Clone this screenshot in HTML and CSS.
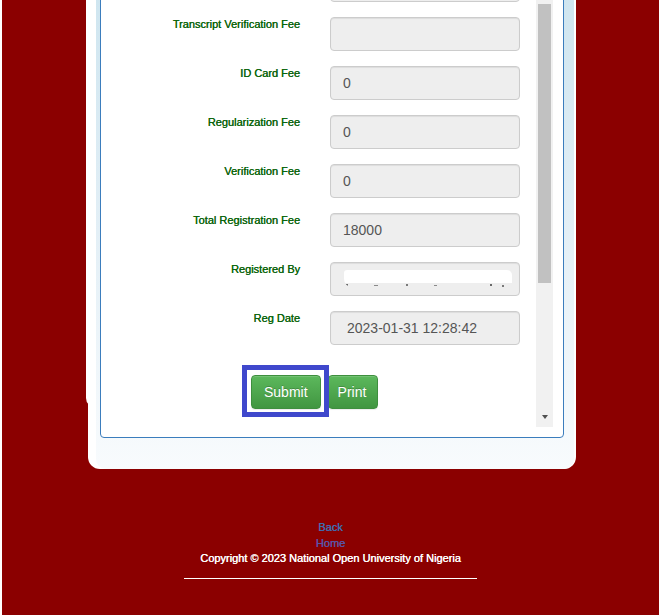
FILE: index.html
```html
<!DOCTYPE html>
<html lang="en">
<head>
<meta charset="utf-8">
<title>Registration</title>
<link rel="stylesheet" href="styles.css">
</head>
<body>
<div class="card">
  <div class="well">
    <div class="box">
      <div class="scroller">
        <div class="content">
          <div class="row"><label class="lbl"></label><div class="field"></div></div>
          <div class="row"><label class="lbl">Transcript Verification Fee</label><div class="field"></div></div>
          <div class="row"><label class="lbl">ID Card Fee</label><div class="field">0</div></div>
          <div class="row"><label class="lbl">Regularization Fee</label><div class="field">0</div></div>
          <div class="row"><label class="lbl">Verification Fee</label><div class="field">0</div></div>
          <div class="row"><label class="lbl">Total Registration Fee</label><div class="field">18000</div></div>
          <div class="row"><label class="lbl">Registered By</label><div class="field"><span class="redact"></span></div></div>
          <div class="row"><label class="lbl">Reg Date</label><div class="field field-date">2023-01-31 12:28:42</div></div>
          <div class="actions">
            <button class="btn btn-submit" type="button">Submit</button>
            <button class="btn btn-print" type="button">Print</button>
            <div class="mark"></div>
          </div>
        </div>
        <div class="scrollbar">
          <div class="thumb"></div>
          <div class="track-fill"></div>
          <div class="arrow"></div>
        </div>
      </div>
    </div>
  </div>
</div>
<footer class="footer">
  <a class="link back" href="#">Back</a>
  <a class="link home" href="#">Home</a>
  <div class="copy">Copyright © 2023 National Open University of Nigeria</div>
  <div class="rule"></div>
</footer>
</body>
</html>
```
FILE: styles.css
```css
html, body {
  margin: 0;
  padding: 0;
}
body {
  background: #8b0000;
  border-left: 2px solid #ffffff;
  min-height: 615px;
  box-sizing: border-box;
  font-family: "Liberation Sans", Arial, sans-serif;
  overflow: hidden;
}
.card {
  position: relative;
  margin: -60px 0 0 86px;
  width: 488px;
  background: #ffffff;
  border-radius: 0 0 12px 12px;
  padding: 0 2px 0 8px;
  box-sizing: border-box;
}
.card::before {
  content: "";
  position: absolute;
  left: -2px;
  top: 0;
  width: 14px;
  height: 468px;
  background: #ffffff;
  border-bottom-left-radius: 10px;
}
.well {
  position: relative;
  background: linear-gradient(to bottom, #cae3ee 0%, #e3eff6 55%, #f8fbfd 100%);
  padding: 10px 10px 31px 4px;
  border-radius: 0 0 10px 10px;
}
.box {
  border: 1px solid #3b7dbd;
  border-radius: 4px;
  background: #ffffff;
  padding: 0 10px 10px 10px;
}
.scroller {
  display: flex;
  height: 476px;
  overflow: hidden;
}
.content {
  flex: 1;
  padding-top: 17px;
}
.row {
  display: flex;
  align-items: flex-start;
  gap: 30px;
  margin-bottom: 15px;
}
.lbl {
  width: 189px;
  flex: none;
  text-align: right;
  font-size: 11px;
  line-height: 15.7px;
  color: #0b650b;
  text-shadow: 0.3px 0 0 #0b650b;
}
.field {
  width: 190px;
  height: 34px;
  box-sizing: border-box;
  border: 1px solid #cccccc;
  border-radius: 4px;
  background: #eeeeee;
  box-shadow: inset 0 1px 1px rgba(0, 0, 0, 0.075);
  padding: 6px 12px;
  font-size: 14px;
  line-height: 20px;
  color: #555555;
  position: relative;
}
.field-date {
  padding-left: 16px;
}
.redact {
  position: absolute;
  left: 13px;
  top: 7px;
  width: 168px;
  height: 17px;
  background:
    linear-gradient(#6a6a6a, #6a6a6a) 2px 14px / 2px 2px no-repeat,
    linear-gradient(#8a8a8a, #8a8a8a) 30px 15px / 4px 1px no-repeat,
    linear-gradient(#7a7a7a, #7a7a7a) 62px 14px / 2px 2px no-repeat,
    linear-gradient(#8a8a8a, #8a8a8a) 90px 15px / 3px 1px no-repeat,
    linear-gradient(#6a6a6a, #6a6a6a) 146px 14px / 2px 2px no-repeat,
    linear-gradient(#7a7a7a, #7a7a7a) 158px 15px / 2px 2px no-repeat,
    linear-gradient(to bottom, #ffffff 0, #ffffff 13px, transparent 13px);
  border-radius: 3px 5px 2px 8px;
}
.actions {
  position: relative;
  display: flex;
  gap: 7px;
  margin-top: 30px;
  padding-left: 140px;
}
.btn {
  height: 34px;
  box-sizing: border-box;
  border: 1px solid #3e8f3e;
  border-radius: 4px;
  background: linear-gradient(to bottom, #5cb85c 0%, #419641 100%);
  color: #ffffff;
  font-family: "Liberation Sans", Arial, sans-serif;
  font-size: 14px;
  line-height: 20px;
  padding: 6px 12px;
  text-shadow: 0 -1px 0 rgba(0, 0, 0, 0.2);
  box-shadow: inset 0 1px 0 rgba(255, 255, 255, 0.15), 0 1px 1px rgba(0, 0, 0, 0.075);
  cursor: pointer;
}
.btn-print {
  padding: 6px 11px 6px 9px;
}
.mark {
  position: absolute;
  left: 131px;
  top: -10px;
  width: 87px;
  height: 52px;
  box-sizing: border-box;
  border: 5px solid #3f48cc;
}
.scrollbar {
  width: 17px;
  flex: none;
  background: #f1f1f1;
  display: flex;
  flex-direction: column;
  align-items: center;
}
.thumb {
  margin-top: 53px;
  width: 13px;
  height: 279px;
  background: #c1c1c1;
}
.track-fill {
  flex: 1;
}
.arrow {
  width: 0;
  height: 0;
  border-left: 3.5px solid transparent;
  border-right: 3.5px solid transparent;
  border-top: 4px solid #505050;
  margin-bottom: 8px;
}
.footer {
  margin-top: 51px;
  display: flex;
  flex-direction: column;
  align-items: center;
  font-size: 11px;
  line-height: 15.5px;
}
.link {
  text-decoration: none;
}
.back {
  color: #416cb0;
  text-shadow: 0.35px 0 0 #416cb0;
}
.home {
  color: #5a54a4;
  text-shadow: 0.35px 0 0 #5a54a4;
}
.copy {
  color: #ffffff;
  text-shadow: 0.35px 0 0 #ffffff;
}
.rule {
  width: 293px;
  margin-top: 11px;
  border-top: 1px solid #ffffff;
}
```
